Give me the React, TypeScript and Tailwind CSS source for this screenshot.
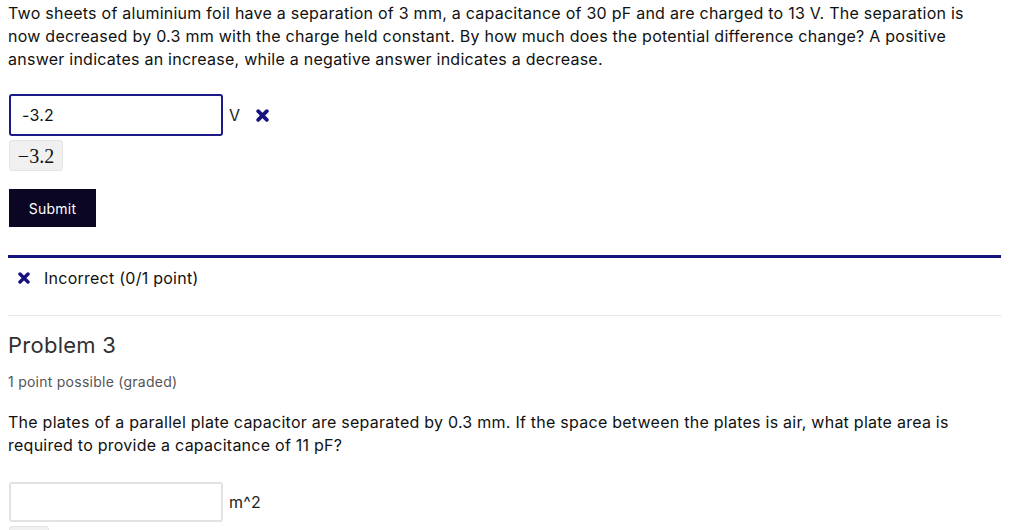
import React from 'react';

const CrossIcon: React.FC<{ className?: string }> = ({ className }) => (
  <svg viewBox="0 0 12 12" className={className}>
    <path d="M2 2 L10 10 M10 2 L2 10" stroke="currentColor" strokeWidth="3.4" strokeLinecap="round" />
  </svg>
);

const App: React.FC = () => {
  return (
    <div className="w-[1024px] h-[530px] overflow-hidden bg-white pl-2 pr-[23px] text-[#111] tracking-[0.25px] font-['Inter','Liberation_Sans',sans-serif]">
      <p className="text-[16px] leading-[23px] pt-[2px]">
        Two sheets of aluminium foil have a separation of 3 mm, a capacitance of 30 pF and are charged to 13 V. The separation is
        now decreased by 0.3 mm with the charge held constant. By how much does the potential difference change? A positive
        answer indicates an increase, while a negative answer indicates a decrease.
      </p>

      <div className="flex items-center mt-[23px]">
        <div className="ml-[1px] w-[214px] h-[42px] border-2 border-[#1c1a86] rounded-[3px] flex items-center px-[11px] text-[16px]">
          -3.2
        </div>
        <span className="ml-[6px] text-[16px] text-[#222]">V</span>
        <CrossIcon className="ml-[16px] w-[13px] h-[13px] text-[#16127e]" />
      </div>
      <div className="ml-[1px] mt-[4px] w-[54px] h-[31px] bg-[#f0f0f0] border border-[#e4e4e4] rounded-[3px] flex items-center justify-center tracking-normal text-[20px] font-['Liberation_Serif',serif]">
        −3.2
      </div>

      <button className="ml-[1px] mt-[18px] w-[87px] h-[38px] bg-[#0b0623] text-white text-[14px]">
        Submit
      </button>

      <div className="mt-[28px] h-[3px] bg-[#15137e]" />
      <div className="flex items-center h-[40px] pl-[10px]">
        <CrossIcon className="w-[12px] h-[12px] text-[#16127e]" />
        <span className="ml-[14px] text-[16px]">Incorrect (0/1 point)</span>
      </div>
      <div className="mt-[17px] h-[1px] bg-[#e6e6e6]" />

      <h2 className="mt-[15px] text-[22px] leading-[28px] text-[#313131]">Problem 3</h2>
      <p className="mt-[14px] text-[14px] leading-[18px] text-[#555]">1 point possible (graded)</p>

      <p className="mt-[20px] text-[16px] leading-[23px]">
        The plates of a parallel plate capacitor are separated by 0.3 mm. If the space between the plates is air, what plate area is
        required to provide a capacitance of 11 pF?
      </p>

      <div className="flex items-center mt-[25px]">
        <div className="ml-[1px] w-[214px] h-[40px] border-2 border-[#e2e2e2] rounded-[3px]" />
        <span className="ml-[6px] text-[16px] text-[#222]">m^2</span>
      </div>
      <div className="ml-[1px] mt-[4px] w-[40px] h-[20px] bg-[#f0f0f0] border border-[#e4e4e4] rounded-[3px]" />
    </div>
  );
};

export default App;
